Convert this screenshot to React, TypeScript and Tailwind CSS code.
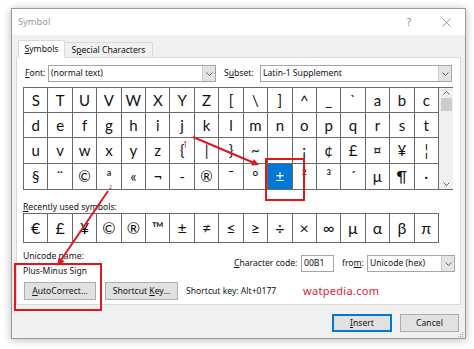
import React from "react";

const R1 = ["S","T","U","V","W","X","Y","Z","[","\\","]","^","_","`","a","b","c"];
const R2 = ["d","e","f","g","h","i","j","k","l","m","n","o","p","q","r","s","t"];
const R3 = ["u","v","w","x","y","z","{","|","}","~","","¡","¢","£","¤","¥","¦"];
const R4 = ["§","¨","©","ª","«","¬","-","®","¯","°","±","²","³","´","µ","¶","·"];
const ROWS = [R1, R2, R3, R4];
const ROWH = ["h-[25px]", "h-[25px]", "h-[26px]", "h-[26px]"];
const RECENT = ["€","£","¥","©","®","™","±","≠","≤","≥","÷","×","∞","µ","α","β","π"];

const UI = { fontFamily: '"Noto Sans", "Open Sans", sans-serif' };
const GLYPH = { fontFamily: 'Lato, "Noto Sans", "DejaVu Sans", sans-serif' };

function U({ children }: { children: React.ReactNode }) {
  return <span className="underline underline-offset-[1px] decoration-[0.5px]">{children}</span>;
}

function Chevron({ up = false }: { up?: boolean }) {
  return (
    <svg width="7" height="4" viewBox="0 0 7 4" className="block">
      <polyline
        points={up ? "0.5,3.5 3.5,0.5 6.5,3.5" : "0.5,0.5 3.5,3.5 6.5,0.5"}
        fill="none"
        stroke="#606060"
        strokeWidth="1"
      />
    </svg>
  );
}

function Dropdown({ className, text }: { className: string; text: string }) {
  return (
    <div className={`${className} h-[17px] border border-[#a5a5a5] bg-white flex items-center`}>
      <span className="flex-1 pl-[2px] text-[#111] leading-none whitespace-nowrap">{text}</span>
      <div className="w-[13px] h-full bg-[#e3e3e3] border-l border-[#cdcdcd] flex items-center justify-center">
        <Chevron />
      </div>
    </div>
  );
}

function Btn({ className, children, def = false }: { className: string; children: React.ReactNode; def?: boolean }) {
  return (
    <div
      className={`${className} flex items-center justify-center bg-[#e1e1e1] text-[#111] whitespace-nowrap border ${
        def ? "border-[#0078d7] shadow-[inset_0_0_0_1px_#0078d7]" : "border-[#adadad]"
      }`}
    >
      {children}
    </div>
  );
}

export default function App() {
  return (
    <div className="relative w-[474px] h-[349px] bg-white overflow-hidden pl-[11px] pt-[8px] text-[8.6px]" style={UI}>
      <div className="w-[455px] h-[331px] border border-[#9a9a9a] bg-[#f0f0f0] shadow-[0_1px_8px_rgba(0,0,0,0.28)] flex flex-col">
        {/* Title bar */}
        <div className="h-[26px] bg-white flex items-center pl-[6px] text-[#999] shrink-0">
          <span className="text-[9.3px]">Symbol</span>
          <span className="ml-auto text-[10px] mr-[31px] text-[#888]">?</span>
          <svg width="9" height="9" viewBox="0 0 9 9" className="mr-[14px]">
            <path d="M0.5 0.5 L8.5 8.5 M8.5 0.5 L0.5 8.5" stroke="#8a8a8a" strokeWidth="0.9" fill="none" />
          </svg>
        </div>

        {/* Tabs + panel */}
        <div className="px-[4px] pt-[5px] flex flex-col shrink-0">
          <div className="h-[17px] flex items-end pl-[2px]">
            <div className="relative z-10 -mb-px h-[18px] w-[47px] bg-white border border-b-0 border-[#d9d9d9] flex items-center justify-center text-[#111]">
              <span><U>S</U>ymbols</span>
            </div>
            <div className="h-[15px] w-[88px] bg-[#f0f0f0] border border-b-0 border-l-0 border-[#d9d9d9] flex items-center justify-center text-[#111]">
              <span>S<U>p</U>ecial Characters</span>
            </div>
          </div>

          <div className="h-[248px] bg-white border border-[#d9d9d9] pl-[6px] pt-[7px] flex flex-col text-[#111]">
            {/* Font / Subset row */}
            <div className="flex items-center h-[17px]">
              <span className="ml-[2px] w-[23px]"><U>F</U>ont:</span>
              <Dropdown className="w-[168px]" text="(normal text)" />
              <span className="ml-[8px] w-[36px]">S<U>u</U>bset:</span>
              <Dropdown className="w-[192px]" text="Latin-1 Supplement" />
            </div>

            {/* Symbol grid + scrollbar */}
            <div className="mt-[5px] flex">
              <div className="w-[416px] border-l border-t border-[#6a6a6a]" style={GLYPH}>
                {ROWS.map((row, ri) => (
                  <div key={ri} className={`grid grid-cols-[repeat(17,minmax(0,1fr))] ${ROWH[ri]}`}>
                    {row.map((ch, ci) => {
                      const sel = ri === 3 && ci === 10;
                      return (
                        <div
                          key={ci}
                          className={`border-r border-b border-[#6a6a6a] flex items-center justify-center text-[15px] leading-none ${
                            sel ? "bg-[#0078d7] text-white" : "text-[#111]"
                          }`}
                        >
                          {ch}
                        </div>
                      );
                    })}
                  </div>
                ))}
              </div>
              <div className="w-[14px] h-[103px] bg-[#f0f0f0] border-t border-b border-[#6a6a6a] flex flex-col items-center">
                <div className="h-[10px] flex items-center"><Chevron up /></div>
                <div className="w-[11px] h-[13px] bg-[#cdcdcd]" />
                <div className="flex-1" />
                <div className="h-[10px] flex items-center"><Chevron /></div>
              </div>
            </div>

            {/* Recently used */}
            <div className="mt-[11px] h-[12px] leading-[12px]"><U>R</U>ecently used symbols:</div>
            <div
              className="w-[416px] border-l border-t border-[#6a6a6a] grid grid-cols-[repeat(17,minmax(0,1fr))] h-[30px]"
              style={GLYPH}
            >
              {RECENT.map((ch, i) => (
                <div key={i} className="border-r border-b border-[#6a6a6a] flex items-center justify-center text-[16px] leading-none text-[#111]">
                  {ch}
                </div>
              ))}
            </div>

            {/* Unicode name / character code */}
            <div className="flex mt-[7px]">
              <div className="w-[211px] flex flex-col">
                <div className="h-[12px] leading-[12px]">Unicode name:</div>
                <div className="mt-[3px] h-[12px] leading-[12px]">Plus-Minus Sign</div>
              </div>
              <div className="mt-[5px] flex items-center h-[17px]">
                <span className="w-[67px]"><U>C</U>haracter code:</span>
                <div className="w-[33px] h-[17px] border border-[#a5a5a5] bg-white flex items-center pl-[2px]">00B1</div>
                <span className="ml-[8px] w-[25px]">fro<U>m</U>:</span>
                <Dropdown className="w-[88px]" text="Unicode (hex)" />
              </div>
            </div>

            {/* Buttons row */}
            <div className="flex items-center mt-[5px] h-[18px]">
              <Btn className="ml-[1px] w-[72px] h-[18px]"><span><U>A</U>utoCorrect...</span></Btn>
              <Btn className="ml-[9px] w-[73px] h-[18px]"><span>Shortcut <U>K</U>ey...</span></Btn>
              <span className="ml-[8px] w-[117px] whitespace-nowrap">Shortcut key: Alt+0177</span>
              <span className="text-[11px] text-[#e0222e] tracking-[0.3px]">watpedia.com</span>
            </div>
          </div>
        </div>

        {/* Insert / Cancel */}
        <div className="flex justify-end pr-[6px] mt-[9px]">
          <Btn className="w-[60px] h-[18px]" def><span><U>I</U>nsert</span></Btn>
          <Btn className="ml-[8px] w-[59px] h-[18px]"><span>Cancel</span></Btn>
        </div>
        <div className="flex-1 flex items-end justify-end pr-[1px] pb-[1px]">
          <svg width="8" height="8" viewBox="0 0 8 8">
            <g fill="#b0b0b0">
              <rect x="6" y="0" width="1.2" height="1.2" />
              <rect x="4" y="2" width="1.2" height="1.2" />
              <rect x="6" y="2" width="1.2" height="1.2" />
              <rect x="2" y="4" width="1.2" height="1.2" />
              <rect x="4" y="4" width="1.2" height="1.2" />
              <rect x="6" y="4" width="1.2" height="1.2" />
            </g>
          </svg>
        </div>
      </div>

      {/* Red annotations overlay */}
      <svg className="absolute left-0 top-0 pointer-events-none" width="474" height="349" viewBox="0 0 474 349">
        <g stroke="#e3161d" strokeWidth="2" fill="none">
          <line x1="193" y1="137" x2="253" y2="162.5" />
          <line x1="108" y1="191" x2="61" y2="260" />
          <rect x="266" y="159" width="38" height="41" />
          <rect x="15" y="264" width="86" height="46" />
        </g>
        <g fill="#e3161d">
          <polygon points="259,165 251.2,165.5 254,159.1" />
          <polygon points="57,266 64.4,261.4 58.6,257.4" />
        </g>
        <text x="183" y="148" fontSize="8" fill="#e3161d" fontFamily="Noto Sans, sans-serif">1</text>
        <text x="109" y="189" fontSize="5.5" fill="#e3161d" fontFamily="Noto Sans, sans-serif">2</text>
      </svg>
    </div>
  );
}
